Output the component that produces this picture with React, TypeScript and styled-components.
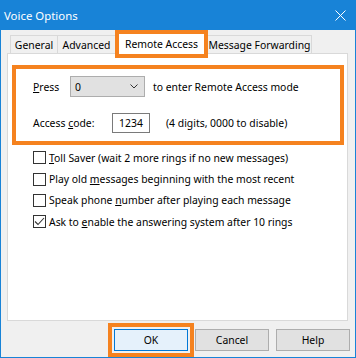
import React from 'react';
import styled, { createGlobalStyle } from 'styled-components';

const ACCENT = '#1883d7';
const ORANGE = '#f5821f';

const Global = createGlobalStyle`
  html, body { margin: 0; padding: 0; background: #ffffff; }
  body {
    font-family: "Noto Sans", "Liberation Sans", sans-serif;
    font-size: 10.4px;
    color: #000000;
  }
  * { box-sizing: border-box; }
`;

const Window = styled.div`
  width: 356px;
  height: 358px;
  border: 1px solid ${ACCENT};
  background: #f0f0f0;
  display: flex;
  flex-direction: column;
`;

const TitleBar = styled.div`
  height: 29px;
  flex-shrink: 0;
  background: ${ACCENT};
  color: #ffffff;
  display: flex;
  align-items: center;
  justify-content: space-between;
  padding: 0 9px 0 3px;
`;

const Title = styled.span`
  font-size: 11.4px;
  line-height: 1;
`;

const Body = styled.div`
  flex: 1;
  display: flex;
  flex-direction: column;
  padding: 0 6px 6px 6px;
`;

const TabStrip = styled.div`
  height: 23px;
  display: flex;
  align-items: flex-end;
  padding-left: 3px;
`;

const Tab = styled.div<{ $w: number }>`
  width: ${(p) => p.$w}px;
  height: 18px;
  margin-left: -1px;
  border: 1px solid #d9d9d9;
  border-bottom: none;
  background: #f0f0f0;
  display: flex;
  align-items: center;
  justify-content: center;
  white-space: nowrap;
  &:first-child { margin-left: 0; }
`;

const ActiveTab = styled.div<{ $w: number }>`
  width: ${(p) => p.$w}px;
  height: 28px;
  margin-left: -1px;
  margin-bottom: -5px;
  border: 4px solid ${ORANGE};
  background: #ffffff;
  position: relative;
  z-index: 1;
  display: flex;
  align-items: center;
  justify-content: center;
  white-space: nowrap;
`;

const Panel = styled.div`
  width: 341px;
  height: 268px;
  flex-shrink: 0;
  border: 1px solid #d9d9d9;
  background: #ffffff;
  padding: 11px 3px 0 4px;
  display: flex;
  flex-direction: column;
`;

const Highlight = styled.div`
  height: 80px;
  border: 4px solid ${ORANGE};
  padding: 7px 0 0 17px;
  display: flex;
  flex-direction: column;
  gap: 16px;
`;

const Row = styled.div`
  display: flex;
  align-items: center;
  white-space: nowrap;
`;

const Label = styled.span<{ $w: number }>`
  width: ${(p) => p.$w}px;
  flex-shrink: 0;
`;

const Select = styled.div`
  width: 75px;
  height: 21px;
  background: #e1e1e1;
  border: 1px solid #adadad;
  display: flex;
  align-items: center;
  justify-content: space-between;
  padding: 0 6px 0 4px;
  margin-right: 8px;
`;

const TextBox = styled.div`
  width: 38px;
  height: 20px;
  border: 1px solid #7a7a7a;
  background: #ffffff;
  display: flex;
  align-items: center;
  justify-content: center;
  margin-right: 16px;
`;

const CheckList = styled.div`
  margin-top: 2px;
  padding-left: 21px;
  display: flex;
  flex-direction: column;
`;

const CheckRow = styled.label`
  height: 21.4px;
  display: flex;
  align-items: center;
  gap: 3px;
  white-space: nowrap;
`;

const Box = styled.span`
  width: 13px;
  height: 13px;
  border: 1px solid #333333;
  background: #ffffff;
  display: flex;
  align-items: center;
  justify-content: center;
  flex-shrink: 0;
`;

const ButtonRow = styled.div`
  margin-top: 8px;
  height: 22px;
  display: flex;
  justify-content: flex-end;
  gap: 7px;
  margin-right: -1px;
`;

const Button = styled.div<{ $default?: boolean }>`
  width: 74px;
  height: 22px;
  display: flex;
  align-items: center;
  justify-content: center;
  background: ${(p) => (p.$default ? '#e5f1fb' : '#e1e1e1')};
  border: 1px solid ${(p) => (p.$default ? '#0078d7' : '#adadad')};
  position: relative;
  ${(p) =>
    p.$default
      ? `&::after {
          content: '';
          position: absolute;
          inset: -7px;
          border: 4px solid ${ORANGE};
        }`
      : ''}
`;

const CloseIcon = () => (
  <svg width="11" height="11" viewBox="0 0 11 11">
    <path d="M0.5 0.5 L10.5 10.5 M10.5 0.5 L0.5 10.5" stroke="#ffffff" strokeWidth="1" fill="none" />
  </svg>
);

const Chevron = () => (
  <svg width="8" height="5" viewBox="0 0 8 5">
    <path d="M0.5 0.5 L4 4 L7.5 0.5" stroke="#333333" strokeWidth="1" fill="none" />
  </svg>
);

const Check = () => (
  <svg width="11" height="11" viewBox="0 0 11 11">
    <path d="M1 5.5 L4 8.5 L10 2" stroke="#333333" strokeWidth="1.1" fill="none" />
  </svg>
);

const options: { label: React.ReactNode; checked: boolean }[] = [
  { label: <><u>T</u>oll Saver (wait 2 more rings if no new messages)</>, checked: false },
  { label: <>Play old <u>m</u>essages beginning with the most recent</>, checked: false },
  { label: <>Speak phone <u>n</u>umber after playing each message</>, checked: false },
  { label: <>Ask to <u>e</u>nable the answering system after 10 rings</>, checked: true },
];

export default function App() {
  return (
    <>
      <Global />
      <Window>
        <TitleBar>
          <Title>Voice Options</Title>
          <CloseIcon />
        </TitleBar>
        <Body>
          <TabStrip>
            <Tab $w={48}>General</Tab>
            <Tab $w={59}>Advanced</Tab>
            <ActiveTab $w={93}>Remote Access</ActiveTab>
            <Tab $w={105}>Message Forwarding</Tab>
          </TabStrip>
          <Panel>
            <Highlight>
              <Row>
                <Label $w={37}><u>P</u>ress</Label>
                <Select>
                  <span>0</span>
                  <Chevron />
                </Select>
                <span>to enter Remote Access mode</span>
              </Row>
              <Row>
                <Label $w={79}>Access <u>c</u>ode:</Label>
                <TextBox>1234</TextBox>
                <span>(4 digits, 0000 to disable)</span>
              </Row>
            </Highlight>
            <CheckList>
              {options.map((o, i) => (
                <CheckRow key={i}>
                  <Box>{o.checked && <Check />}</Box>
                  <span>{o.label}</span>
                </CheckRow>
              ))}
            </CheckList>
          </Panel>
          <ButtonRow>
            <Button $default>OK</Button>
            <Button>Cancel</Button>
            <Button>Help</Button>
          </ButtonRow>
        </Body>
      </Window>
    </>
  );
}
